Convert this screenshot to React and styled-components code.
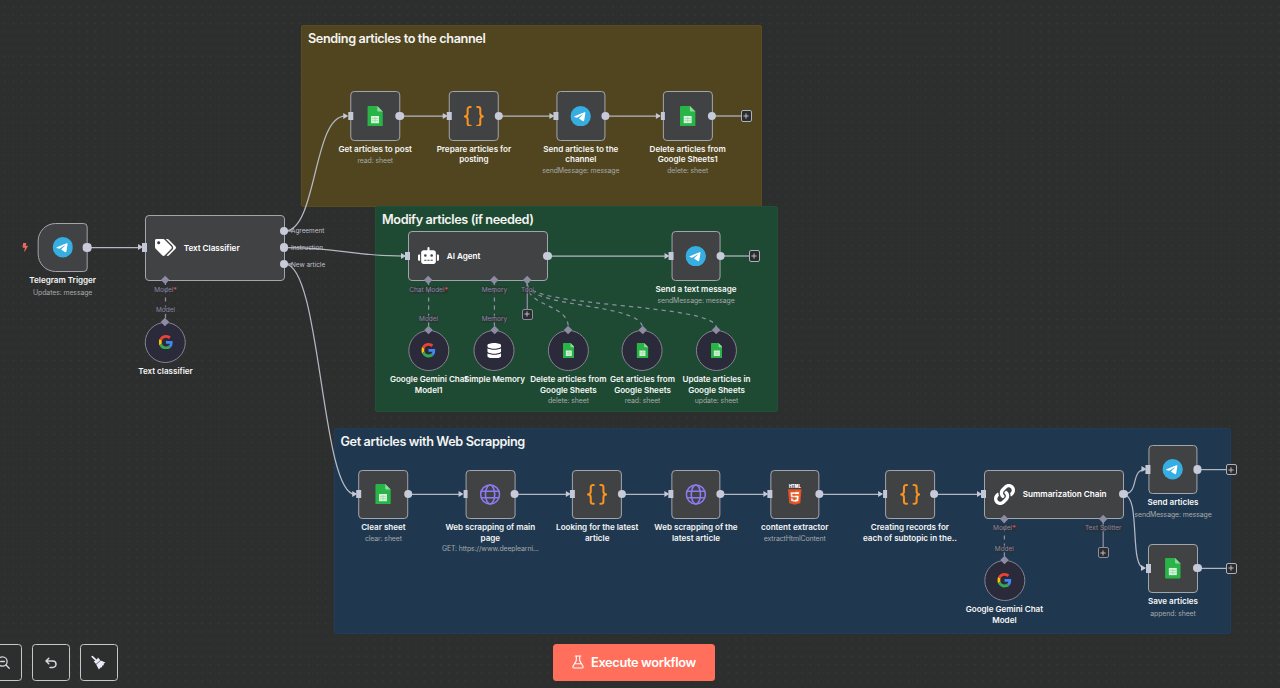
import React from "react";
import styled, { createGlobalStyle, css } from "styled-components";
import { FaTags, FaRobot, FaDatabase, FaLink, FaBolt } from "react-icons/fa";

const Global = createGlobalStyle`
  * { box-sizing: border-box; }
  body { margin: 0; background: #2d2e2e; font-family: Inter, "Open Sans", sans-serif; overflow: hidden; }
`;

const Canvas = styled.main`
  position: relative;
  display: flex;
  flex-direction: column;
  justify-content: flex-end;
  width: 1280px;
  height: 688px;
  overflow: hidden;
  background-color: #2d2e2e;
  background-image: radial-gradient(circle, #3a3b3b 0.5px, transparent 1px);
  background-size: 8.23px 8.23px;
  background-position: 1px 3px;
`;

const Sticky = styled.section`
  position: absolute;
  left: ${(p) => p.$x}px;
  top: ${(p) => p.$y}px;
  width: ${(p) => p.$w}px;
  height: ${(p) => p.$h}px;
  padding: 5px 6px;
  border: 1px solid ${(p) => p.$edge};
  border-radius: 2px;
  background: ${(p) => p.$fill};
`;

const StickyTitle = styled.h2`
  margin: 0;
  font-size: 12.7px;
  letter-spacing: -0.39px;
  line-height: 16px;
  font-weight: 600;
  color: #f4f4f2;
  white-space: nowrap;
`;

const Wires = styled.svg`
  position: absolute;
  inset: 0;
  fill: none;
  stroke: #b4b7c2;
  stroke-width: 1.25;
`;

const Placed = styled.div`
  position: absolute;
  left: ${(p) => p.$x}px;
  top: ${(p) => p.$y}px;
  transform: translateX(-50%);
  display: flex;
  flex-direction: column;
  align-items: center;
`;

const Box = styled.div`
  position: relative;
  display: flex;
  align-items: center;
  justify-content: ${(p) => (p.$w ? "flex-start" : "center")};
  gap: 8px;
  padding-left: ${(p) => (p.$w ? 9 : 0)}px;
  width: ${(p) => p.$w || 49.6}px;
  height: ${(p) => p.$h || 49.6}px;
  border: 1.3px solid #a3a5ac;
  border-radius: ${(p) => (p.$trigger ? "18px 4px 4px 18px" : "4px")};
  background: #414244;
  color: #fff;
  font-size: 8.2px;
  letter-spacing: -0.05px;
  font-weight: 600;
  white-space: nowrap;
`;

const Disc = styled.div`
  position: relative;
  display: flex;
  align-items: center;
  justify-content: center;
  width: 41px;
  height: 41px;
  border: 1.2px solid #85838f;
  border-radius: 50%;
  background: #2b2a3a;
  color: #fff;
`;

const Caption = styled.div`
  display: flex;
  flex-direction: column;
  align-items: center;
  margin-top: 3px;
  white-space: nowrap;
`;

const Name = styled.div`
  font-size: 8.1px;
  letter-spacing: -0.02px;
  line-height: 10.6px;
  font-weight: 600;
  color: #f6f6f6;
`;

const Detail = styled.div`
  margin-top: ${(p) => (p.$gap ? 1.8 : 1.2)}px;
  font-size: 6.9px;
  letter-spacing: -0.09px;
  line-height: 10px;
  color: #a6a8aa;
`;

const InPort = styled.i`
  position: absolute;
  left: -3.4px;
  top: calc(50% - 4.2px);
  width: 4.8px;
  height: 8.4px;
  background: #c3c7d6;
  &::before {
    content: "";
    position: absolute;
    right: 4.2px;
    top: 0.8px;
    border: 3.4px solid transparent;
    border-left: 5px solid #c3c7d6;
    border-right: 0;
  }
`;

const OutPort = styled.i`
  position: absolute;
  right: -4.8px;
  top: calc(50% - 4.1px + ${(p) => p.$dy || 0}px);
  width: 8.2px;
  height: 8.2px;
  border-radius: 50%;
  background: #c6cad9;
`;

const Diamond = styled.i`
  position: absolute;
  left: ${(p) => p.$x}px;
  ${(p) => (p.$top ? css`top: -4px;` : css`bottom: -4px;`)}
  width: 6.4px;
  height: 6.4px;
  margin-left: -3.1px;
  transform: rotate(45deg);
  background: #8e8ca5;
`;

const PortLabel = styled.span`
  position: absolute;
  left: ${(p) => p.$x}px;
  top: ${(p) => p.$y}px;
  transform: translate(${(p) => (p.$left ? "0" : "-50%")}, -50%);
  font-size: ${(p) => (p.$left ? 6.4 : 6.5)}px;
  line-height: 7px;
  color: ${(p) => (p.$left ? "#c0c3cd" : "#8a87a6")};
  background: ${(p) => (p.$left ? "transparent" : "rgba(45, 46, 46, 0.6)")};
  white-space: nowrap;
  b { color: #f0544f; font-weight: 600; }
`;

const PlusBox = styled.button`
  position: absolute;
  left: ${(p) => p.$x - 5.7}px;
  top: ${(p) => p.$y - 5.7}px;
  display: flex;
  align-items: center;
  justify-content: center;
  width: 11.4px;
  height: 11.4px;
  padding: 0;
  border: 1.2px solid ${(p) => (p.$dim ? "#8e8ca0" : "#aeb1bb")};
  border-radius: 2px;
  background: #2b2c2e;
  color: #b9bbc2;
`;

const Bolt = styled.div`
  position: absolute;
  left: 21px;
  top: 243px;
  display: flex;
  color: #f0685a;
`;

const Footer = styled.footer`
  position: relative;
  display: grid;
  grid-template-columns: 1fr auto 1fr;
  align-items: center;
  padding-bottom: 7px;
`;

const Controls = styled.nav`
  display: flex;
  gap: 10.5px;
  margin-left: -15.5px;
`;

const ToolButton = styled.button`
  display: flex;
  align-items: center;
  justify-content: center;
  width: 37.4px;
  height: 37px;
  padding: 0;
  border: 1.3px solid #c6c7cd;
  border-radius: 3.5px;
  background: #2d2e2e;
  color: #d6d7dc;
`;

const Execute = styled.button`
  display: flex;
  align-items: center;
  justify-content: center;
  gap: 6.5px;
  width: 161.6px;
  height: 37px;
  margin-right: 11.6px;
  padding: 0 0 1px;
  border: 0;
  border-radius: 3.5px;
  background: #ff6f5c;
  color: #fff;
  font: 600 12.8px Inter, sans-serif;
  letter-spacing: -0.34px;
  white-space: nowrap;
`;

const Sheets = ({ small }) => (
  <svg width={small ? 11.8 : 15.6} height={small ? 15.4 : 20.4} viewBox="0 0 31 41">
    <path d="M2 0h18l11 11v28a2 2 0 0 1-2 2H2a2 2 0 0 1-2-2V2a2 2 0 0 1 2-2z" fill="#28b446" />
    <path d="M20 0l11 11H22a2 2 0 0 1-2-2z" fill="#8fd6a0" />
    <path d="M7.5 20h16v14.5h-16z" fill="#d8f3dd" />
    <path d="M9 25h13M9 29.5h13M15.5 22v11" stroke="#8ad79b" strokeWidth="1.3" />
  </svg>
);

const Telegram = () => (
  <svg width="20.4" height="20.4" viewBox="0 0 24 24">
    <circle cx="12" cy="12" r="12" fill="#36aee2" />
    <path fill="#fff" d="M5.43 11.87c3.5-1.52 5.83-2.53 7-3.01 3.33-1.39 4.02-1.63 4.47-1.64.1 0 .32.02.47.14.12.1.15.23.17.33.02.1.04.31.02.47-.18 1.9-.96 6.5-1.36 8.63-.17.9-.5 1.2-.82 1.23-.7.06-1.22-.46-1.9-.9-1.06-.69-1.65-1.12-2.68-1.8-1.19-.78-.42-1.21.26-1.91.18-.18 3.25-2.98 3.31-3.23.01-.03.01-.15-.06-.21-.07-.06-.17-.04-.25-.02-.11.02-1.79 1.14-5.06 3.35-.48.33-.91.49-1.3.48-.43-.01-1.25-.24-1.87-.44-.75-.25-1.35-.38-1.3-.79.03-.22.33-.44.9-.68z" />
  </svg>
);

const Code = () => (
  <svg width="20.4" height="20.8" viewBox="0 0 20 20.4" fill="none" stroke="#f7931e" strokeWidth="2" strokeLinecap="round" strokeLinejoin="round">
    <path d="M6.8 1H6C4.6 1 3.8 1.9 3.8 3.2v4C3.8 9 2.8 10.2 1 10.2c1.8 0 2.8 1.2 2.8 3v4c0 1.3.8 2.2 2.2 2.2h.8" />
    <path d="M13.2 1h.8c1.4 0 2.2.9 2.2 2.2v4c0 1.8 1 3 2.8 3-1.8 0-2.8 1.2-2.8 3v4c0 1.3-.8 2.2-2.2 2.2h-.8" />
  </svg>
);

const Globe = () => (
  <svg width="21" height="21" viewBox="0 0 21 21" fill="none" stroke="#8a7cf0" strokeWidth="1.6">
    <circle cx="10.5" cy="10.5" r="9.5" />
    <ellipse cx="10.5" cy="10.5" rx="4.6" ry="9.5" />
    <path d="M1.6 7.2h17.8M1.6 13.8h17.8" />
  </svg>
);

const Html5 = () => (
  <svg width="14.8" height="20.8" viewBox="30 -178 451 690">
    <text x="256" y="-50" textAnchor="middle" textLength="390" lengthAdjust="spacingAndGlyphs" fontSize="140" fontWeight="900" fontFamily="Inter, sans-serif" fill="#fff">HTML</text>
    <path fill="#e34f26" d="M71 460L30 0h451l-41 460-185 52" />
    <path fill="#ef652a" d="M256 472l149-41 35-394H256" />
    <path fill="#ebebeb" d="M256 208h-75l-5-58h80V94H114l1 15 14 156h127zM256 355l-64-17-4-45h-56l7 89 117 32z" />
    <path fill="#fff" d="M255 208v57h70l-7 73-63 17v59l116-32 1-10 13-149 2-15zM255 94v56h137l1-12 3-29 1-15z" />
  </svg>
);

const Google = () => (
  <svg width="14.4" height="14.4" viewBox="0 0 48 48">
    <path fill="#ea4335" d="M24 9.5c3.54 0 6.71 1.22 9.21 3.6l6.85-6.85C35.9 2.38 30.47 0 24 0 14.62 0 6.51 5.38 2.56 13.22l7.98 6.19C12.43 13.72 17.74 9.5 24 9.5z" />
    <path fill="#4285f4" d="M46.98 24.55c0-1.57-.15-3.09-.38-4.55H24v9.02h12.94c-.58 2.96-2.26 5.48-4.78 7.18l7.73 6c4.51-4.18 7.09-10.36 7.09-17.65z" />
    <path fill="#fbbc05" d="M10.53 28.59c-.48-1.45-.76-2.99-.76-4.59s.27-3.14.76-4.59l-7.98-6.19C.92 16.46 0 20.12 0 24c0 3.88.92 7.54 2.56 10.78l7.97-6.19z" />
    <path fill="#34a853" d="M24 48c6.48 0 11.93-2.13 15.89-5.81l-7.73-6c-2.15 1.45-4.92 2.3-8.16 2.3-6.26 0-11.57-4.22-13.47-9.91l-7.98 6.19C6.51 42.62 14.62 48 24 48z" />
  </svg>
);

const ZoomOut = () => (
  <svg width="13" height="13" viewBox="0 0 13 13" fill="none" stroke="currentColor" strokeWidth="1.3" strokeLinecap="round">
    <circle cx="5.5" cy="5.5" r="4.6" />
    <path d="M9 9l3.2 3.2M3.6 5.5h3.8" />
  </svg>
);

const Undo = () => (
  <svg width="12" height="12" viewBox="0 0 12 12" fill="none" stroke="currentColor" strokeWidth="1.5" strokeLinecap="round" strokeLinejoin="round">
    <path d="M3.8 1.2L1 4l2.8 2.8M1.2 4h6.6a3 3 0 0 1 0 6.4H5" />
  </svg>
);

const Broom = () => (
  <svg width="15" height="15" viewBox="0 0 15 15" fill="#eceaf6">
    <path d="M1.3 1.6l3.9 3.7" stroke="#eceaf6" strokeWidth="1.8" strokeLinecap="round" />
    <path d="M2.6 6.3l1.5-.4 2.3-2.2.6-1.2 2.3 2.7-4.3 3.7z" />
    <path d="M9.8 5.6l4.6 2-1.7 1.1.1 1.5-1.5.4-.3 1.7-1.5.1-1.6 2-2.700-4.900z" />
  </svg>
);

const Flask = () => (
  <svg width="12" height="14" viewBox="0 0 12 14" fill="none" stroke="currentColor" strokeWidth="1.1" strokeLinecap="round" strokeLinejoin="round">
    <path d="M3.2 1h5.6M4.3 1v4.6L1 11.2c-.5 1 0 1.8 1 1.8h8c1 0 1.5-.8 1-1.8L7.7 5.6V1M2.8 8.8h6.4" />
  </svg>
);

const Plus = () => (
  <svg width="6" height="6" viewBox="0 0 6 6" stroke="currentColor" strokeWidth="1">
    <path d="M3 .4v5.2M.4 3h5.2" />
  </svg>
);

const icons = {
  sheets: <Sheets />,
  sheetsSmall: <Sheets small />,
  telegram: <Telegram />,
  code: <Code />,
  globe: <Globe />,
  html: <Html5 />,
  google: <Google />,
  memory: <FaDatabase size={15.5} />,
};

const Labels = ({ name, detail }) => (
  <Caption>
    {name.map((line) => <Name key={line}>{line}</Name>)}
    {detail && <Detail $gap={name.length === 1}>{detail}</Detail>}
  </Caption>
);

const StepNode = ({ x, y, icon, name, detail, trigger }) => (
  <Placed $x={x} $y={y - 24.8}>
    <Box $trigger={trigger}>
      {icons[icon]}
      {!trigger && <InPort />}
      <OutPort />
    </Box>
    <Labels name={name} detail={detail} />
  </Placed>
);

const WideNode = ({ x, y, h = 49.6, icon, title, outputs = [0], diamonds }) => (
  <Placed $x={x} $y={y - h / 2}>
    <Box $w={140} $h={h}>
      {icon}
      {title}
      <InPort />
      {outputs.map((dy) => <OutPort key={dy} $dy={dy} />)}
      {diamonds.map((d) => <Diamond key={d} $x={d} />)}
    </Box>
  </Placed>
);

const SubNode = ({ x, y, icon, name, detail }) => (
  <Placed $x={x} $y={y - 20.5}>
    <Disc>
      {icons[icon]}
      <Diamond $x={19.3} $top />
    </Disc>
    <Labels name={name} detail={detail} />
  </Placed>
);

const stickies = [
  { x: 301, y: 25, w: 461, h: 181.5, fill: "#51451f", edge: "#5a4c20", title: "Sending articles to the channel" },
  { x: 375, y: 206, w: 403, h: 206, fill: "#1e4a34", edge: "#1f5038", title: "Modify articles (if needed)" },
  { x: 333.5, y: 428, w: 897, h: 206, fill: "#1f3850", edge: "#203c5a", title: "Get articles with Web Scrapping" },
];

const steps = [
  { x: 62.7, y: 247.5, icon: "telegram", name: ["Telegram Trigger"], detail: "Updates: message", trigger: true },
  { x: 375.2, y: 116, icon: "sheets", name: ["Get articles to post"], detail: "read: sheet" },
  { x: 473.9, y: 116, icon: "code", name: ["Prepare articles for", "posting"] },
  { x: 580.8, y: 116, icon: "telegram", name: ["Send articles to the", "channel"], detail: "sendMessage: message" },
  { x: 687.7, y: 116, icon: "sheets", name: ["Delete articles from", "Google Sheets1"], detail: "delete: sheet" },
  { x: 696, y: 256, icon: "telegram", name: ["Send a text message"], detail: "sendMessage: message" },
  { x: 383.4, y: 494.3, icon: "sheets", name: ["Clear sheet"], detail: "clear: sheet" },
  { x: 490.3, y: 494.3, icon: "globe", name: ["Web scrapping of main", "page"], detail: "GET: https://www.deeplearni..." },
  { x: 597.2, y: 494.3, icon: "code", name: ["Looking for the latest", "article"] },
  { x: 696, y: 494.3, icon: "globe", name: ["Web scrapping of the", "latest article"] },
  { x: 794.7, y: 494.3, icon: "html", name: ["content extractor"], detail: "extractHtmlContent" },
  { x: 909.9, y: 494.3, icon: "code", name: ["Creating records for", "each of subtopic in the.."] },
  { x: 1173, y: 469.6, icon: "telegram", name: ["Send articles"], detail: "sendMessage: message" },
  { x: 1173, y: 568.4, icon: "sheets", name: ["Save articles"], detail: "append: sheet" },
];

const subNodes = [
  { x: 165.5, y: 342, icon: "google", name: ["Text classifier"] },
  { x: 428.6, y: 350.5, icon: "google", name: ["Google Gemini Chat", "Model1"] },
  { x: 494.4, y: 350.5, icon: "memory", name: ["Simple Memory"] },
  { x: 568.4, y: 350.5, icon: "sheetsSmall", name: ["Delete articles from", "Google Sheets"], detail: "delete: sheet" },
  { x: 642.5, y: 350.5, icon: "sheetsSmall", name: ["Get articles from", "Google Sheets"], detail: "read: sheet" },
  { x: 716.5, y: 350.5, icon: "sheetsSmall", name: ["Update articles in", "Google Sheets"], detail: "update: sheet" },
  { x: 1004.4, y: 580.7, icon: "google", name: ["Google Gemini Chat", "Model"] },
];

const wires = [
  "M87 247.5H141", "M400 116H446", "M498 116H553", "M605 116H660", "M712 116H741",
  "M547 256H668", "M720 256H749", "M408 494.3H462", "M515 494.3H569", "M622 494.3H668",
  "M720 494.3H767", "M819 494.3H882", "M934 494.3H981", "M1197 469.6H1226", "M1197 568.4H1226",
  "M285 231C317 231 313 116 345 116",
  "M285 247.5C346 247.5 346 256 405 256",
  "M285 264C321 264 321 494.3 355 494.3",
  "M1123 494.3C1140 494.3 1130 469.6 1145 469.6",
  "M1123 494.3C1142 494.3 1128 568.4 1145 568.4",
  "M285 231H292", "M285 264H292",
];

const dashed = [
  "M165.5 281V322", "M428.6 281V330", "M494.4 281V330", "M1004.4 519V560",
  "M527.3 284C527.3 308 568.4 303 568.4 328",
  "M527.3 284C527.3 308 642.5 303 642.5 328",
  "M527.3 284C527.3 308 716.5 303 716.5 328",
];

const portLabels = [
  { x: 165.5, y: 289.8, t: "Model", req: true },
  { x: 165.5, y: 310.2, t: "Model" },
  { x: 428.6, y: 289.8, t: "Chat Model", req: true },
  { x: 428.6, y: 319, t: "Model" },
  { x: 494.4, y: 289.8, t: "Memory" },
  { x: 494.4, y: 319, t: "Memory" },
  { x: 527.5, y: 289.8, t: "Tool" },
  { x: 1004.4, y: 528, t: "Model", req: true },
  { x: 1004.4, y: 549.2, t: "Model" },
  { x: 1103.2, y: 528, t: "Text Splitter" },
  { x: 291, y: 230.9, t: "Agreement", left: true },
  { x: 291, y: 247.9, t: "Instruction", left: true },
  { x: 291, y: 264.6, t: "New article", left: true },
];

const pluses = [
  [746.3, 116], [754.5, 256], [1231.5, 469.6], [1231.5, 568.4],
  [527.3, 314.5, true], [1103.2, 552.8, true],
];

export default function App() {
  return (
    <>
      <Global />
      <Canvas>
        {stickies.map((s) => (
          <Sticky key={s.title} $x={s.x} $y={s.y} $w={s.w} $h={s.h} $fill={s.fill} $edge={s.edge}>
            <StickyTitle>{s.title}</StickyTitle>
          </Sticky>
        ))}

        <Wires width="1280" height="688">
          {wires.map((d) => <path key={d} d={d} />)}
          <g stroke="#8f8da3">
            <path d="M527.3 281V309M1103.2 519V547" />
            {dashed.map((d) => <path key={d} d={d} strokeDasharray="4.1 4.1" />)}
          </g>
        </Wires>

        <Bolt><FaBolt size={8.5} /></Bolt>
        <WideNode x={214.7} y={247.5} h={66} icon={<FaTags size={21} />} title="Text Classifier" outputs={[-16.7, 0, 16.7]} diamonds={[19.5]} />
        <WideNode x={477.8} y={256} icon={<FaRobot size={21} />} title="AI Agent" diamonds={[19.5, 85.3, 118.2]} />
        <WideNode x={1053.8} y={494.3} icon={<FaLink size={21} />} title="Summarization Chain" diamonds={[19.5, 118.2]} />
        {steps.map((s) => <StepNode key={`${s.x}-${s.y}`} {...s} />)}
        {subNodes.map((s) => <SubNode key={s.x} {...s} />)}
        {portLabels.map((l) => (
          <PortLabel key={`${l.x}-${l.y}`} $x={l.x} $y={l.y} $left={l.left}>
            {l.t}{l.req && <b>*</b>}
          </PortLabel>
        ))}
        {pluses.map(([x, y, dim]) => <PlusBox key={`${x}-${y}`} $x={x} $y={y} $dim={dim}><Plus /></PlusBox>)}

        <Footer>
          <Controls>
            <ToolButton><ZoomOut /></ToolButton>
            <ToolButton><Undo /></ToolButton>
            <ToolButton><Broom /></ToolButton>
          </Controls>
          <Execute><Flask />Execute workflow</Execute>
        </Footer>
      </Canvas>
    </>
  );
}
